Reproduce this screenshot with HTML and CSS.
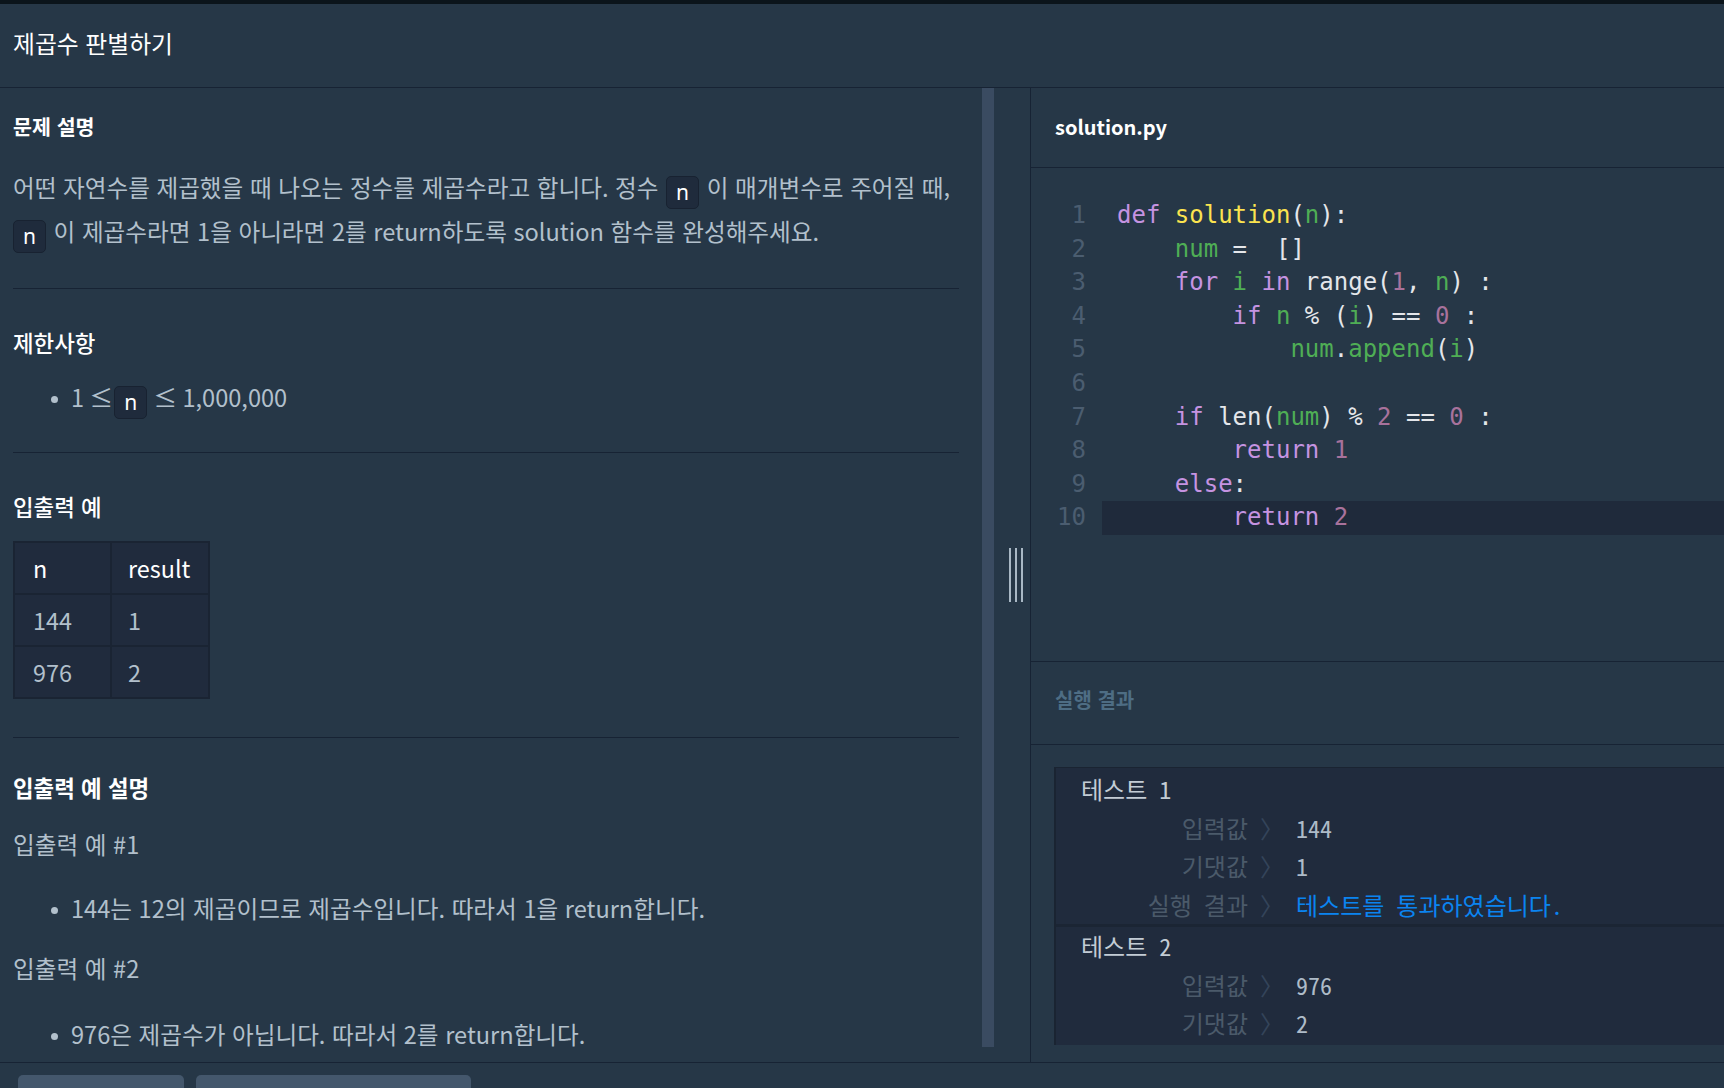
FILE: index.html
```html
<!DOCTYPE html>
<html lang="ko">
<head>
<meta charset="utf-8">
<title>제곱수 판별하기</title>
<link rel="stylesheet" href="styles.css">
</head>
<body>
<div class="app">
  <header class="topbar"><h1 class="title">제곱수 판별하기</h1></header>
  <main class="main">
    <section class="left">
      <div class="desc">
        <h2 class="h h-bold h-first">문제 설명</h2>
        <p class="para p-first">어떤 자연수를 제곱했을 때 나오는 정수를 제곱수라고 합니다. 정수 <code class="ic">n</code> 이 매개변수로 주어질 때,<br><code class="ic ic-start">n</code> 이 제곱수라면 1을 아니라면 2를 return하도록 solution 함수를 완성해주세요.</p>
        <hr class="rule rule-1">
        <h2 class="h">제한사항</h2>
        <ul class="list list-limit">
          <li>1 ≤ <code class="ic ic-tight">n</code> ≤ 1,000,000</li>
        </ul>
        <hr class="rule rule-2">
        <h2 class="h">입출력 예</h2>
        <table class="ex">
          <thead><tr><th class="c1">n</th><th class="c2">result</th></tr></thead>
          <tbody>
            <tr><td class="c1">144</td><td class="c2">1</td></tr>
            <tr><td class="c1">976</td><td class="c2">2</td></tr>
          </tbody>
        </table>
        <hr class="rule rule-3">
        <h2 class="h h-bold">입출력 예 설명</h2>
        <p class="para p-ex1">입출력 예 #1</p>
        <ul class="list list-ex1"><li>144는 12의 제곱이므로 제곱수입니다. 따라서 1을 return합니다.</li></ul>
        <p class="para p-ex2">입출력 예 #2</p>
        <ul class="list list-ex2"><li>976은 제곱수가 아닙니다. 따라서 2를 return합니다.</li></ul>
      </div>
      <div class="scrollbar"></div>
    </section>
    <div class="gutter"><div class="handle"><span></span><span></span><span></span></div></div>
    <section class="right">
      <div class="ed-head">solution.py</div>
      <div class="code">
        <div class="ln"><span class="no">1</span><span class="src"><span class="k">def</span> <span class="f">solution</span>(<span class="v">n</span>):</span></div>
        <div class="ln"><span class="no">2</span><span class="src">    <span class="v">num</span> =  []</span></div>
        <div class="ln"><span class="no">3</span><span class="src">    <span class="k">for</span> <span class="v">i</span> <span class="k">in</span> range(<span class="m">1</span>, <span class="v">n</span>) :</span></div>
        <div class="ln"><span class="no">4</span><span class="src">        <span class="k">if</span> <span class="v">n</span> % (<span class="v">i</span>) == <span class="m">0</span> :</span></div>
        <div class="ln"><span class="no">5</span><span class="src">            <span class="v">num</span>.<span class="v">append</span>(<span class="v">i</span>)</span></div>
        <div class="ln"><span class="no">6</span><span class="src"> </span></div>
        <div class="ln"><span class="no">7</span><span class="src">    <span class="k">if</span> len(<span class="v">num</span>) % <span class="m">2</span> == <span class="m">0</span> :</span></div>
        <div class="ln"><span class="no">8</span><span class="src">        <span class="k">return</span> <span class="m">1</span></span></div>
        <div class="ln"><span class="no">9</span><span class="src">    <span class="k">else</span>:</span></div>
        <div class="ln active"><span class="no">10</span><span class="src">        <span class="k">return</span> <span class="m">2</span></span></div>
      </div>
      <div class="run-head">실행 결과</div>
      <div class="run-body">
        <div class="result">
          <div class="test">
            <div class="t-title">테스트 1</div>
            <div class="row"><span class="lbl">입력값</span><span class="arr">〉</span><span class="val">144</span></div>
            <div class="row"><span class="lbl">기댓값</span><span class="arr">〉</span><span class="val">1</span></div>
            <div class="row"><span class="lbl">실행 결과</span><span class="arr">〉</span><span class="val pass">테스트를 통과하였습니다.</span></div>
          </div>
          <div class="test test-2">
            <div class="t-title">테스트 2</div>
            <div class="row"><span class="lbl">입력값</span><span class="arr">〉</span><span class="val">976</span></div>
            <div class="row"><span class="lbl">기댓값</span><span class="arr">〉</span><span class="val">2</span></div>
          </div>
        </div>
      </div>
    </section>
  </main>
  <footer class="footer">
    <div class="btn btn-a"></div>
    <div class="btn btn-b"></div>
  </footer>
</div>
</body>
</html>
```
FILE: styles.css
```css
* { box-sizing: border-box; }
html, body { margin: 0; padding: 0; }
body {
  width: 1724px;
  height: 1088px;
  overflow: hidden;
  background: #263747;
  font-family: "Noto Sans CJK KR", "Noto Sans", sans-serif;
  color: #b2c0cc;
}
.app { display: flex; flex-direction: column; height: 1088px; }

.topbar {
  height: 88px;
  border-top: 4px solid #0b141b;
  border-bottom: 1px solid #172334;
  display: flex;
  align-items: center;
  padding-left: 13px;
  padding-bottom: 6px;
}
.title {
  margin: 0;
  font-size: 23.8px;
  font-weight: 400;
  color: #ffffff;
  line-height: 30px;
}

.main { display: flex; height: 974px; }

/* left description */
.left { display: flex; width: 994px; }
.desc {
  flex: 1;
  overflow: hidden;
  padding: 24px 23px 0 13px;
}
.scrollbar { width: 12px; background: #3a4b61; margin-bottom: 15px; }

.h {
  margin: 39px 0 0;
  font-size: 22.4px;
  line-height: 28px;
  font-weight: 500;
  color: #ffffff;
}
.h-bold { font-weight: 700; }
.h-first { margin-top: 0; font-size: 20.6px; }

.para {
  margin: 0;
  font-size: 23.6px;
  line-height: 44px;
  color: #b2c0cc;
}
.p-first { margin-top: 25px; }
.p-ex1 { margin-top: 21px; }
.p-ex2 { margin-top: 16px; }

.ic {
  display: inline-block;
  font-family: "Noto Sans", "Noto Sans CJK KR", sans-serif;
  font-size: 21px;
  line-height: 31px;
  padding: 0 9px;
  margin: 0 1px;
  background: #1f2b3c;
  border: 1px solid #182231;
  border-radius: 5px;
  color: #ffffff;
  vertical-align: -3px;
}
.ic-start { margin-left: 0; }
.ic-tight { margin: 0 1px 0 -4px; }

.rule {
  margin: 0;
  border: 0;
  height: 1px;
  background: #172334;
}
.rule-1 { margin-top: 35px; }
.rule-2 { margin-top: 33px; }
.rule-3 { margin-top: 38px; }
.rule + .h { margin-top: 39px; }
.rule-3 + .h { margin-top: 35px; }

.list {
  margin: 0;
  padding-left: 58px;
  font-size: 23.6px;
  line-height: 44px;
  color: #b2c0cc;
  list-style: none;
}
.list li::before {
  content: "";
  display: inline-block;
  width: 7px;
  height: 7px;
  border-radius: 50%;
  background: #b2c0cc;
  margin: 0 13px 0 -20px;
  vertical-align: middle;
  position: relative;
  top: -1px;
}
.list-limit { margin-top: 19px; }
.list-ex1 { margin-top: 20px; }
.list-ex2 { margin-top: 22px; }

.ex {
  margin-top: 21px;
  border-collapse: collapse;
  background: #202b3d;
  font-size: 23.4px;
  border: 2px solid #1a2433;
}
.ex th, .ex td {
  border: 2px solid #1a2433;
  height: 52px;
  padding: 0 0 0 18px;
  text-align: left;
  vertical-align: middle;
}
.ex th { color: #ffffff; font-weight: 400; height: 52px; }
.ex td { color: #b2c0cc; }
.ex .c1 { width: 97px; }
.ex .c2 { width: 98px; padding-left: 16px; }

/* gutter */
.gutter {
  width: 36px;
  display: flex;
  align-items: center;
  padding-left: 15px;
}
.handle { display: flex; gap: 4px; height: 54px; }
.handle span { width: 2px; background: #a9b8c5; }

/* right */
.right {
  flex: 1;
  display: flex;
  flex-direction: column;
  border-left: 1px solid #172334;
  min-width: 0;
}
.ed-head {
  height: 80px;
  border-bottom: 1px solid #172334;
  padding-left: 24px;
  display: flex;
  align-items: center;
  font-size: 20px;
  font-weight: 700;
  color: #ffffff;
  padding-bottom: 2px;
}
.code {
  height: 494px;
  border-bottom: 1px solid #172334;
  padding-top: 31px;
  font-family: "DejaVu Sans Mono", "Liberation Mono", monospace;
  font-size: 24px;
}
.ln { display: flex; height: 33.6px; line-height: 33.6px; }
.ln .no {
  width: 71px;
  padding-right: 16px;
  text-align: right;
  color: #4b5d70;
  flex: none;
}
.ln .src {
  flex: 1;
  padding-left: 15px;
  white-space: pre;
  color: #e4e6ea;
}
.ln.active .src { background: #1f2a3b; }
.k { color: #c593e1; }
.f { color: #fbe34f; }
.v { color: #4fae55; }
.m { color: #a8729c; }

.run-head {
  height: 83px;
  border-bottom: 1px solid #172334;
  padding-left: 24px;
  display: flex;
  align-items: center;
  font-size: 20px;
  font-weight: 700;
  color: #4e6d84;
  padding-bottom: 8px;
}
.run-body {
  flex: 1;
  padding: 22px 0 0 23px;
}
.result {
  height: 278px;
  overflow: hidden;
  background: #202b3d;
  border-left: 2px solid #1a2432;
  border-top: 1px solid #1a2432;
  font-family: "Noto Sans Mono CJK KR", "DejaVu Sans Mono", "Noto Sans CJK KR", monospace;
  font-size: 24px;
  font-weight: 300;
}
.test { padding-top: 2px; }
.test-2 { border-top: 3px solid #1b2534; padding-top: 0; }
.t-title {
  height: 38.5px;
  line-height: 38.5px;
  padding-left: 25px;
  color: #c3ccd5;
}
.row { display: flex; height: 38.5px; line-height: 38.5px; }
.lbl { width: 192px; text-align: right; color: #4b5a6a; flex: none; }
.arr { width: 48px; text-align: center; color: #34445a; flex: none; }
.val { color: #aebbc8; font-weight: 400; }
.val.pass { color: #0b84f0; font-weight: 300; }

/* footer */
.footer {
  flex: 1;
  border-top: 1px solid #172334;
  display: flex;
  gap: 12px;
  padding: 12px 0 0 18px;
  overflow: hidden;
}
.btn {
  height: 40px;
  background: #44576c;
  border-radius: 5px;
  flex: none;
}
.btn-a { width: 166px; }
.btn-b { width: 275px; }
```
